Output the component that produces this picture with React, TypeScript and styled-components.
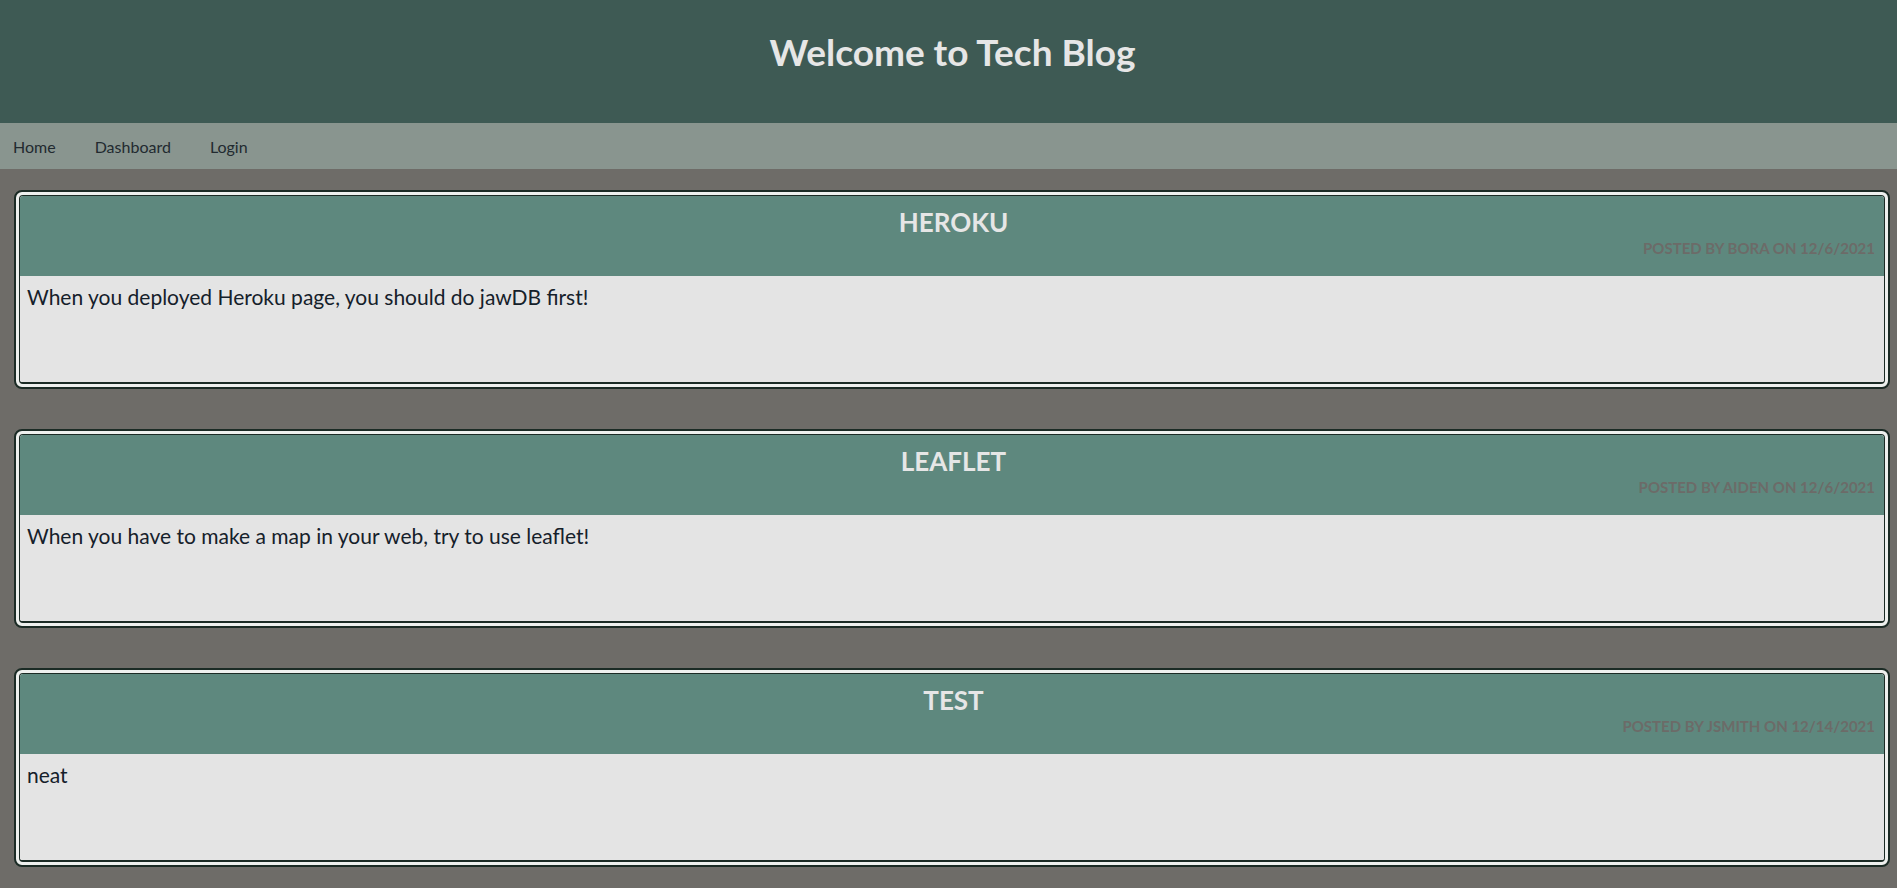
import React from "react";
import styled, { createGlobalStyle } from "styled-components";

const GlobalStyle = createGlobalStyle`
  html, body {
    margin: 0;
    padding: 0;
    background: #6e6c68;
    font-family: "Lato", "Open Sans", sans-serif;
  }
`;

const Header = styled.header`
  height: 123px;
  background: #3e5a54;
  display: flex;
  justify-content: center;
  box-sizing: border-box;
  padding-top: 30px;
  padding-left: 8px;
`;

const Title = styled.h1`
  margin: 0;
  font-size: 37px;
  line-height: 44px;
  font-weight: 700;
  color: #e6e6e6;
`;

const Nav = styled.nav`
  height: 46px;
  background: #89958f;
  display: flex;
  align-items: center;
  gap: 39px;
  padding-left: 13px;
`;

const NavLink = styled.a`
  font-size: 16px;
  color: #222a30;
  text-decoration: none;
  cursor: pointer;
`;

const Main = styled.main`
  display: flex;
  flex-direction: column;
  gap: 40px;
  padding: 21px 7px 21px 14px;
`;

const Card = styled.article`
  border: 2px solid #1b2b25;
  border-radius: 8px;
  background: #eef0ee;
  padding: 3px;
`;

const CardInner = styled.div`
  border: 1px solid #1b2b25;
  border-bottom-width: 2px;
  border-radius: 4px;
  overflow: hidden;
`;

const CardHeader = styled.div`
  height: 80px;
  box-sizing: border-box;
  background: #5e887e;
  display: flex;
  flex-direction: column;
  padding: 10px 9px 0 12px;
`;

const CardTitle = styled.h2`
  margin: 0;
  text-align: center;
  font-size: 26px;
  line-height: 32px;
  font-weight: 700;
  color: #e6e6e6;
  text-transform: uppercase;
`;

const Meta = styled.div`
  text-align: right;
  font-size: 15px;
  line-height: 20px;
  font-weight: 700;
  color: #6c6b68;
  text-transform: uppercase;
`;

const CardBody = styled.div`
  height: 106px;
  box-sizing: border-box;
  background: #e4e4e4;
  padding: 8px 7px;
  font-size: 21px;
  line-height: 26px;
  color: #15202a;
`;

const posts = [
  { title: "Heroku", author: "bora", date: "12/6/2021", body: "When you deployed Heroku page, you should do jawDB first!" },
  { title: "Leaflet", author: "aiden", date: "12/6/2021", body: "When you have to make a map in your web, try to use leaflet!" },
  { title: "test", author: "jsmith", date: "12/14/2021", body: "neat" },
];

export default function App() {
  return (
    <>
      <GlobalStyle />
      <Header>
        <Title>Welcome to Tech Blog</Title>
      </Header>
      <Nav>
        <NavLink>Home</NavLink>
        <NavLink>Dashboard</NavLink>
        <NavLink>Login</NavLink>
      </Nav>
      <Main>
        {posts.map((p) => (
          <Card key={p.title}>
            <CardInner>
              <CardHeader>
                <CardTitle>{p.title}</CardTitle>
                <Meta>
                  Posted by {p.author} on {p.date}
                </Meta>
              </CardHeader>
              <CardBody>{p.body}</CardBody>
            </CardInner>
          </Card>
        ))}
      </Main>
    </>
  );
}
